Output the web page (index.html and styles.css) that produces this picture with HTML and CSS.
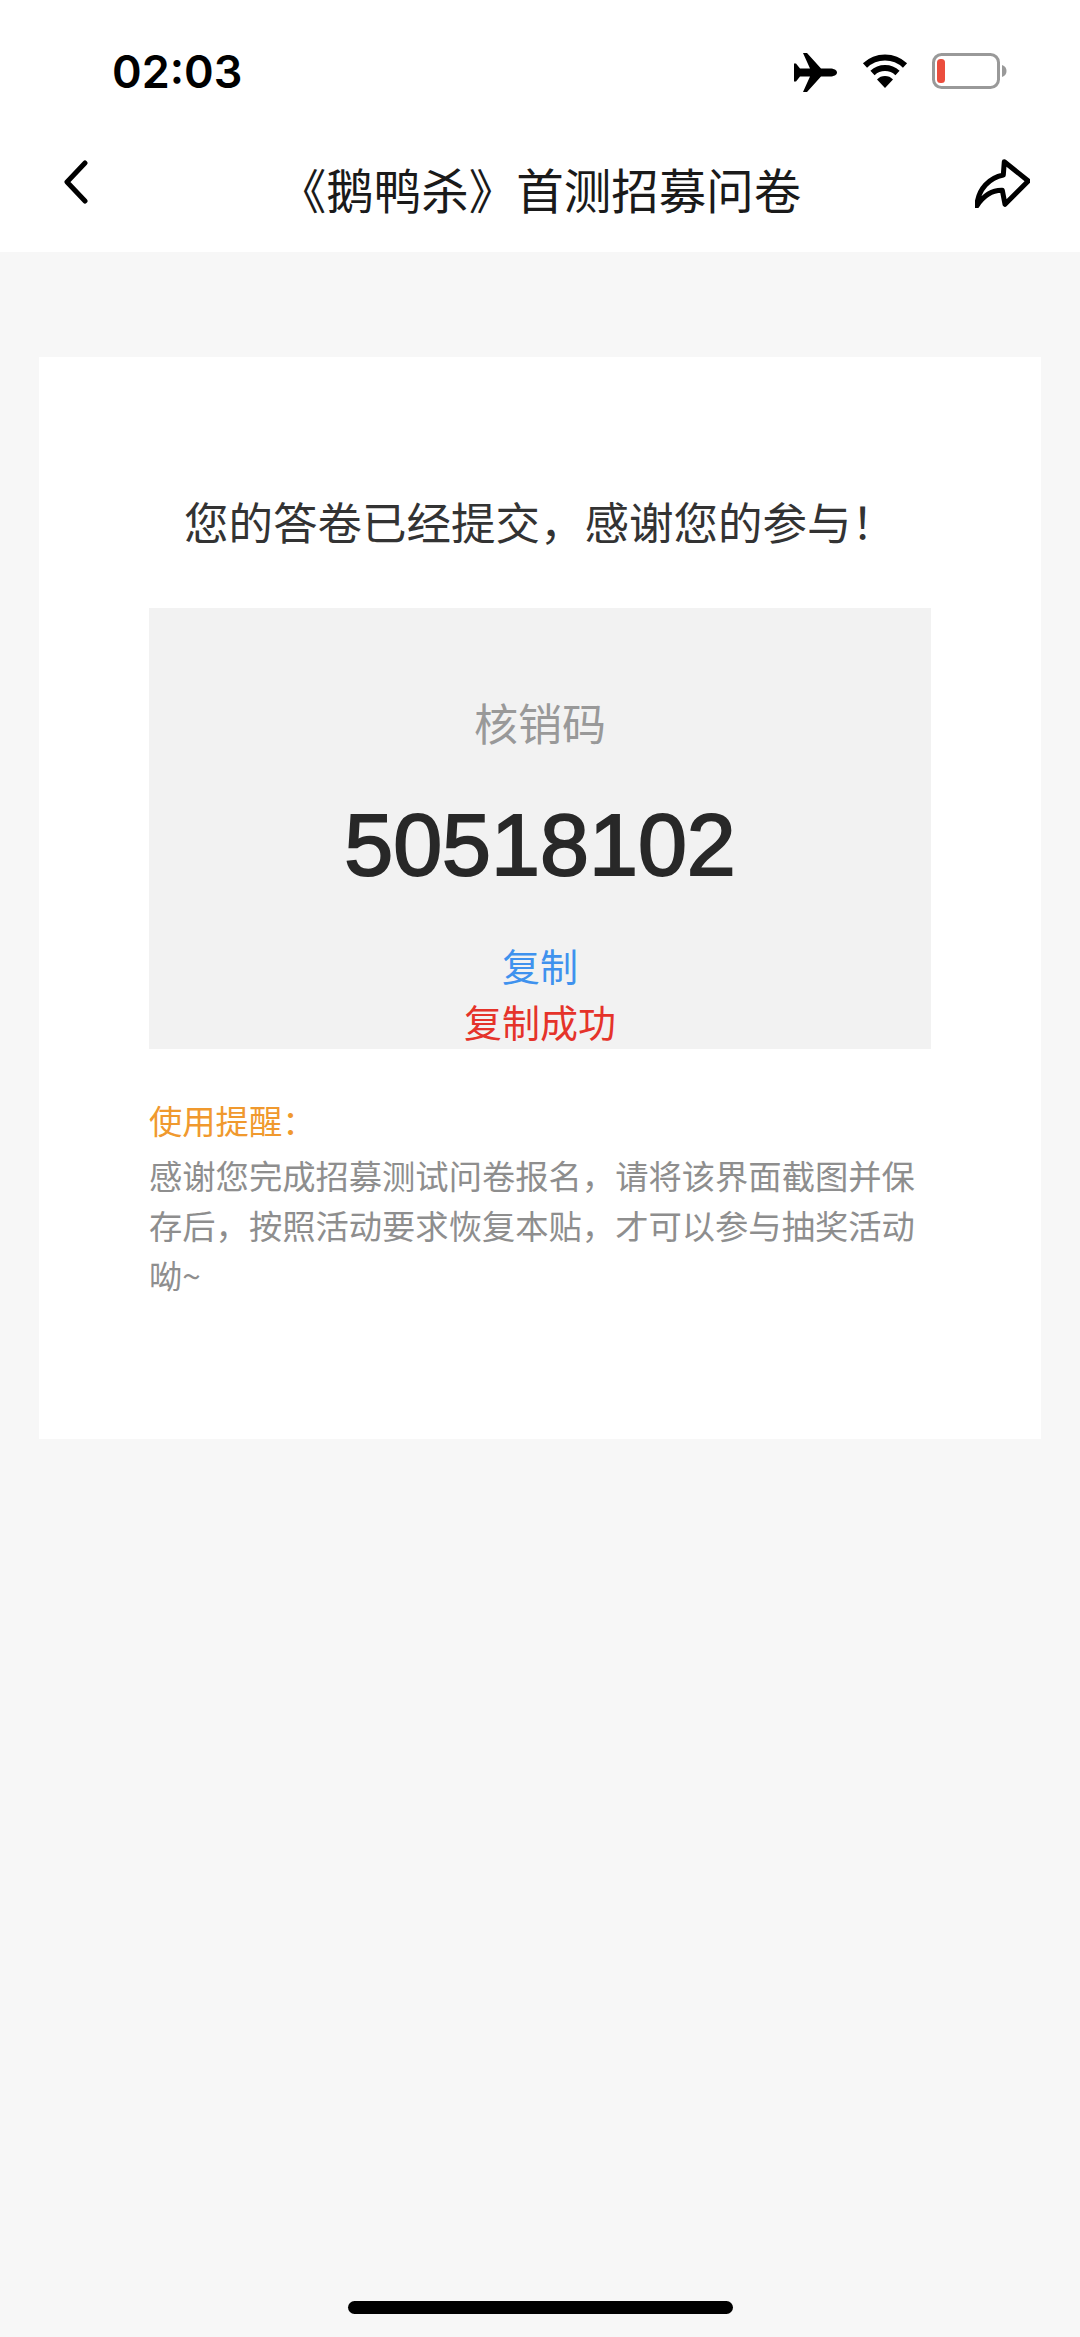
FILE: index.html
```html
<!DOCTYPE html>
<html lang="zh-CN">
<head>
<meta charset="utf-8">
<title>《鹅鸭杀》首测招募问卷</title>
<link rel="stylesheet" href="styles.css">
</head>
<body>
<div class="page">
  <header class="header">
    <div class="status">
      <span class="time">02:03</span>
      <div class="status-icons">
        <svg class="plane" viewBox="0 0 43 39"><path d="M43 19.500c0-2.400-3-4-7-4H27L13 0H9l7 15.500H6L2 10.500H0v18h2l4-5h10L9 39h4l14-15.500h9c4 0 7-1.600 7-4z"/></svg>
        <svg class="wifi" viewBox="0 0 46 34"><path class="wifi-arc" d="M3 11.500a29 29 0 0 1 40 0M10.500 19a18 18 0 0 1 25 0"/><path d="M23 34l-8-8.500a11 11 0 0 1 16 0z"/></svg>
        <svg class="battery" viewBox="0 0 75 36"><rect class="battery-shell" x="1.500" y="1.500" width="65" height="33" rx="8"/><rect class="battery-level" x="5" y="6" width="8" height="24" rx="3.500"/><path class="battery-nub" d="M70 12c3 1 4.500 3 4.500 6s-1.500 5-4.500 6z"/></svg>
      </div>
    </div>
    <nav class="nav">
      <svg class="back" viewBox="0 0 25 44"><path d="M22 3L4 22l18 19"/></svg>
      <h1 class="title">《鹅鸭杀》首测招募问卷</h1>
      <svg class="share" viewBox="0 0 55 49"><path d="M1.700 47C3.300 29 15 18.700 28.300 16l1-13.300 24 19.300L30 45.300l-2.700-14C17 31 8.300 37 1.700 47z"/></svg>
    </nav>
  </header>
  <main class="card">
    <p class="message">您的答卷已经提交&#xFF0C;感谢您的参与&#xFF01;</p>
    <section class="code-box">
      <div class="code-label">核销码</div>
      <div class="code">50518102</div>
      <div class="copy">复制</div>
      <div class="copied">复制成功</div>
    </section>
    <section class="tips">
      <div class="tips-title">使用提醒&#xFF1A;</div>
      <p class="tips-body">感谢您完成招募测试问卷报名&#xFF0C;请将该界面截图并保存后&#xFF0C;按照活动要求恢复本贴&#xFF0C;才可以参与抽奖活动呦~</p>
    </section>
  </main>
  <div class="home-bar"></div>
</div>
</body>
</html>
```

FILE: styles.css
```css
* { box-sizing: border-box; }
html, body { margin: 0; padding: 0; }
body {
  font-family: "Noto Sans CJK SC", "Liberation Sans", sans-serif;
  background: #f7f7f7;
  text-spacing-trim: space-all;
}
.page {
  width: 1080px;
  height: 2337px;
  display: flex;
  flex-direction: column;
  overflow: hidden;
}
.header {
  height: 252px;
  background: #fff;
  flex: none;
}
.status {
  height: 132px;
  padding: 48px 73px 0 112px;
  display: flex;
  justify-content: space-between;
  align-items: flex-start;
}
.time {
  font-family: Inter, "Liberation Sans", sans-serif;
  font-weight: 600;
  font-size: 45px;
  line-height: 48px;
  color: #000;
}
.status-icons {
  display: flex;
  align-items: flex-start;
  padding-top: 5px;
}
.plane { width: 43px; height: 39px; margin-right: 25px; }
.wifi { width: 46px; height: 34px; margin-right: 24px; margin-top: 1px; }
.wifi-arc { fill: none; stroke: #000; stroke-width: 6; }
.battery { width: 75px; height: 36px; }
.battery-shell { fill: #fff; stroke: #999; stroke-width: 3; }
.battery-level { fill: #eb4d3d; }
.battery-nub { fill: #999; }
.nav {
  height: 120px;
  padding: 0 50px;
  display: grid;
  grid-template-columns: 1fr auto 1fr;
  align-items: center;
}
.back { width: 25px; height: 44px; margin: -20px 0 0 13px; }
.back path { fill: none; stroke: #000; stroke-width: 5; stroke-linecap: round; stroke-linejoin: round; }
.share { width: 55px; height: 49px; margin-top: -17px; justify-self: end; }
.share path { fill: none; stroke: #000; stroke-width: 5; stroke-linejoin: round; }
.title {
  margin: -6px 0 0;
  font-size: 47.500px;
  font-weight: 400;
  line-height: 60px;
  color: #1a1a1a;
}
.card {
  margin: 105px 39px 0;
  height: 1082px;
  flex: none;
  background: #fff;
  padding: 134px 110px 0;
}
.message {
  margin: 0;
  font-size: 44.500px;
  line-height: 60px;
  color: #333;
  text-align: center;
  white-space: nowrap;
}
.code-box {
  margin-top: 57px;
  height: 441px;
  background: #f2f2f2;
  padding-top: 84px;
  text-align: center;
}
.code-label {
  font-size: 44px;
  line-height: 60px;
  color: #999;
}
.code {
  margin-top: 43px;
  font-family: "Liberation Sans", Arial, sans-serif;
  font-size: 88px;
  line-height: 100px;
  color: #282828;
  -webkit-text-stroke: 2px #282828;
}
.copy {
  margin-top: 42px;
  font-size: 38px;
  line-height: 56px;
  color: #3f92ee;
}
.copied {
  font-size: 38px;
  line-height: 55px;
  color: #e5332a;
}
.tips { margin-top: 46px; }
.tips-title {
  font-size: 33.300px;
  line-height: 50px;
  color: #f0992e;
}
.tips-body {
  margin: 5px 0 0;
  font-size: 33.300px;
  line-height: 50px;
  color: #8e8e8e;
}
.home-bar {
  margin: auto auto 23px;
  width: 385px;
  height: 13px;
  border-radius: 7px;
  background: #000;
}
```
